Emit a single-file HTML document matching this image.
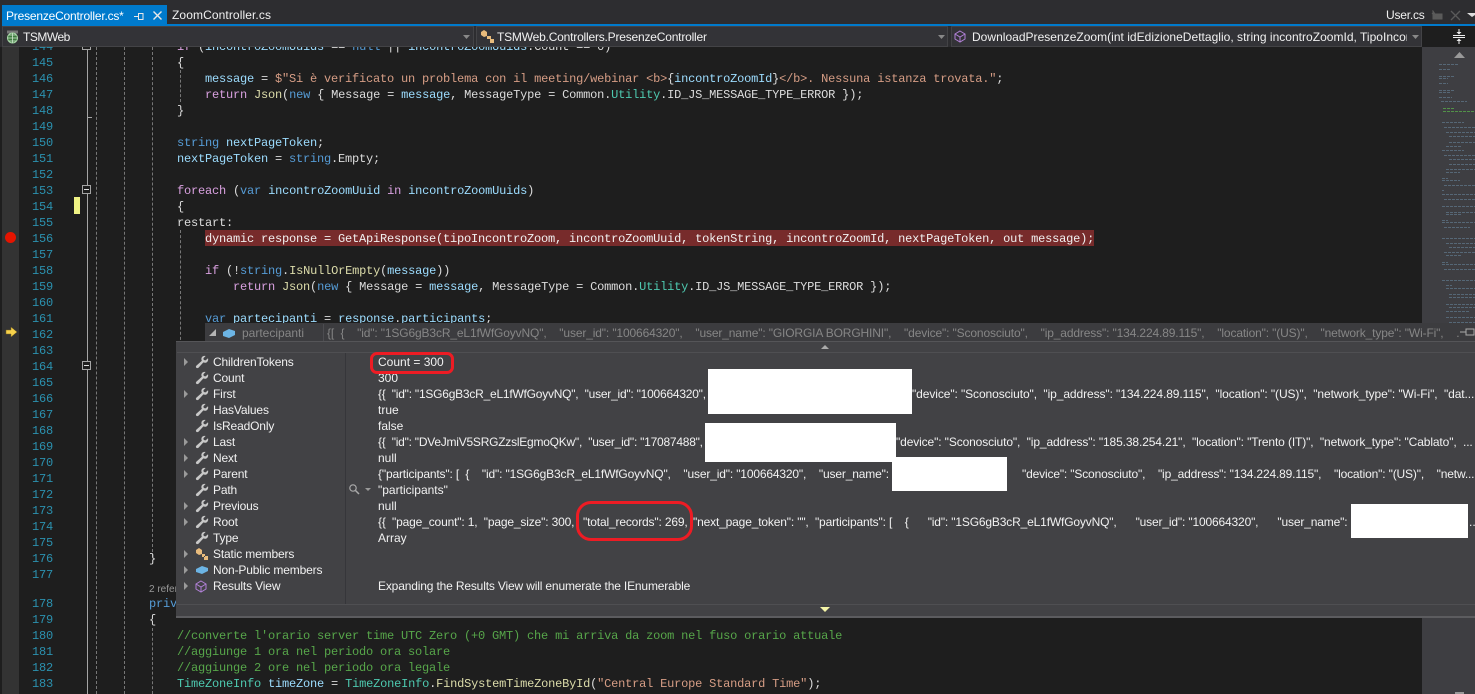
<!DOCTYPE html>
<html><head><meta charset="utf-8"><style>
html,body{margin:0;padding:0;background:#1e1e1e}
#r{position:relative;width:1475px;height:694px;overflow:hidden;background:#1e1e1e}
#r div{position:absolute}
.u,.u span{font:12px/16px "Liberation Sans",sans-serif;white-space:pre;color:#f1f1f1}
.n{font:12px/16px "Liberation Mono",monospace;letter-spacing:-.2px;color:#2b91af;left:32px;white-space:pre;margin-top:1px}
.c{font:12px/16px "Liberation Mono",monospace;letter-spacing:-.2px;color:#dcdcdc;white-space:pre;margin-top:1px}
.k{color:#569cd6}.p{color:#d8a0df}.i{color:#9cdcfe}.s{color:#d69d85}.t{color:#4ec9b0}.g{color:#57a64a}.m{color:#dcdcaa}
.d{width:0;border-left:1px dashed #777}
.w{background:#fff}
.l{left:213px}
.a{width:0;height:0;left:184px;border-left:4px solid #9a9a9a;border-top:4px solid transparent;border-bottom:4px solid transparent}
.b{left:82px;width:7px;height:7px;border:1px solid #a5a5a5;background:#1e1e1e}
.b:after{content:"";position:absolute;left:1px;top:3px;width:5px;height:1px;background:#ddd}
svg{position:absolute}
</style></head><body><div id="r">

<!-- tab bar -->
<div style="left:0;top:0;width:1475px;height:26px;background:#2d2d30"></div>
<div style="left:2px;top:5px;width:165px;height:21px;background:#007acc"></div>
<div style="left:2px;top:24px;width:1473px;height:2px;background:#007acc"></div>
<div class="u" style="left:6px;top:8px;color:#fff;letter-spacing:-.2px">PresenzeController.cs*</div>
<svg style="left:133px;top:10px" width="12" height="12"><path d="M1 6.5H5M5.5 3.5H10V9.5H5.5ZM5.5 3V10" stroke="#e8e8e8" fill="none"/></svg>
<svg style="left:152px;top:10px" width="11" height="11"><path d="M1.5 1.5L9.5 9.5M9.5 1.5L1.5 9.5" stroke="#e8e8e8" stroke-width="1.4"/></svg>
<div class="u" style="left:172px;top:7px;letter-spacing:.1px">ZoomController.cs</div>
<div class="u" style="left:1386px;top:7px;letter-spacing:-.2px">User.cs</div>
<svg style="left:1431px;top:10px" width="44" height="12"><path d="M2 1L4 4H11V9H4L2 9ZM1 3L4 7" stroke="#5a5a5a" fill="#5a5a5a"/><path d="M20 1L29 10M29 1L20 10" stroke="#5a5a5a" stroke-width="1.3"/><path d="M36 3H44V5L41 7Z" fill="#ddd"/></svg>

<!-- editor gutter -->
<div style="left:2px;top:47px;width:17px;height:647px;background:#333333"></div>
<div style="left:87px;top:45px;width:1px;height:649px;background:#a5a5a5"></div>
<div style="left:87px;top:117px;width:5px;height:1px;background:#a5a5a5"></div>
<div class="d" style="left:96px;top:47px;height:647px"></div>
<div class="d" style="left:124px;top:47px;height:647px"></div>
<div class="d" style="left:152px;top:47px;height:510px"></div>
<div class="d" style="left:180px;top:70px;height:32px"></div>
<div class="d" style="left:180px;top:230px;height:120px"></div>
<div class="d" style="left:152px;top:628px;height:66px"></div>
<div class="b" style="top:41px"></div><div class="b" style="top:185px"></div><div class="b" style="top:361px"></div>
<div style="left:74px;top:197px;width:6px;height:17px;background:#eff284"></div>
<div style="left:5px;top:232px;width:11px;height:11px;border-radius:50%;background:#e51400"></div>
<svg style="left:5px;top:326px" width="13" height="12"><path d="M1 4H6V1L12 6L6 11V8H1Z" fill="#f7d24b" stroke="#7a6420" stroke-width=".5"/></svg>

<!-- line numbers -->
<div class="n" style="top:38px">144</div>
<div class="n" style="top:54px">145</div><div class="n" style="top:70px">146</div><div class="n" style="top:86px">147</div><div class="n" style="top:102px">148</div><div class="n" style="top:118px">149</div><div class="n" style="top:134px">150</div><div class="n" style="top:150px">151</div><div class="n" style="top:166px">152</div><div class="n" style="top:182px">153</div><div class="n" style="top:198px">154</div><div class="n" style="top:214px">155</div><div class="n" style="top:230px">156</div><div class="n" style="top:246px">157</div><div class="n" style="top:262px">158</div><div class="n" style="top:278px">159</div><div class="n" style="top:294px">160</div><div class="n" style="top:310px">161</div><div class="n" style="top:326px">162</div><div class="n" style="top:342px">163</div><div class="n" style="top:358px">164</div><div class="n" style="top:374px">165</div><div class="n" style="top:390px">166</div><div class="n" style="top:406px">167</div><div class="n" style="top:422px">168</div><div class="n" style="top:438px">169</div><div class="n" style="top:454px">170</div><div class="n" style="top:470px">171</div><div class="n" style="top:486px">172</div><div class="n" style="top:502px">173</div><div class="n" style="top:518px">174</div><div class="n" style="top:534px">175</div><div class="n" style="top:550px">176</div><div class="n" style="top:566px">177</div><div class="n" style="top:595px">178</div><div class="n" style="top:611px">179</div><div class="n" style="top:627px">180</div><div class="n" style="top:643px">181</div><div class="n" style="top:659px">182</div><div class="n" style="top:675px">183</div>

<!-- code -->
<div class="c" style="left:177px;top:38px"><span class="p">if</span> (<span class="i">incontroZoomUuids</span> == <span class="k">null</span> || <span class="i">incontroZoomUuids</span>.Count == 0)</div>
<div class="c" style="left:177px;top:54px">{</div>
<div class="c" style="left:205px;top:70px"><span class="i">message</span> = <span class="s">$"Si è verificato un problema con il meeting/webinar &lt;b&gt;</span>{<span class="i">incontroZoomId</span>}<span class="s">&lt;/b&gt;. Nessuna istanza trovata."</span>;</div>
<div class="c" style="left:205px;top:86px"><span class="p">return</span> <span class="m">Json</span>(<span class="k">new</span> { Message = <span class="i">message</span>, MessageType = Common.<span class="t">Utility</span>.ID_JS_MESSAGE_TYPE_ERROR });</div>
<div class="c" style="left:177px;top:102px">}</div>
<div class="c" style="left:177px;top:134px"><span class="k">string</span> <span class="i">nextPageToken</span>;</div>
<div class="c" style="left:177px;top:150px"><span class="i">nextPageToken</span> = <span class="k">string</span>.Empty;</div>
<div class="c" style="left:177px;top:182px"><span class="p">foreach</span> (<span class="k">var</span> <span class="i">incontroZoomUuid</span> <span class="p">in</span> <span class="i">incontroZoomUuids</span>)</div>
<div class="c" style="left:177px;top:198px">{</div>
<div class="c" style="left:177px;top:214px">restart:</div>
<div style="left:205px;top:230px;width:889px;height:16px;background:#772b2b"></div>
<div class="c" style="left:205px;top:230px;color:#f0f0f0">dynamic response = GetApiResponse(tipoIncontroZoom, incontroZoomUuid, tokenString, incontroZoomId, nextPageToken, out message);</div>
<div class="c" style="left:205px;top:262px"><span class="p">if</span> (!<span class="k">string</span>.<span class="m">IsNullOrEmpty</span>(<span class="i">message</span>))</div>
<div class="c" style="left:233px;top:278px"><span class="p">return</span> <span class="m">Json</span>(<span class="k">new</span> { Message = <span class="i">message</span>, MessageType = Common.<span class="t">Utility</span>.ID_JS_MESSAGE_TYPE_ERROR });</div>
<div class="c" style="left:205px;top:310px"><span class="k">var</span> <span class="i">partecipanti</span> = <span class="i">response</span>.<span class="i">participants</span>;</div>
<div class="c" style="left:149px;top:550px">}</div>
<div class="u" style="left:149px;top:582px;font-size:10px;color:#999">2 references</div>
<div class="c" style="left:149px;top:595px"><span class="k">private</span></div>
<div class="c" style="left:149px;top:611px">{</div>
<div class="c g" style="left:177px;top:627px">//converte l'orario server time UTC Zero (+0 GMT) che mi arriva da zoom nel fuso orario attuale</div>
<div class="c g" style="left:177px;top:643px">//aggiunge 1 ora nel periodo ora solare</div>
<div class="c g" style="left:177px;top:659px">//aggiunge 2 ore nel periodo ora legale</div>
<div class="c" style="left:177px;top:675px"><span class="t">TimeZoneInfo</span> <span class="i">timeZone</span> = <span class="t">TimeZoneInfo</span>.<span class="m">FindSystemTimeZoneById</span>(<span class="s">"Central Europe Standard Time"</span>);</div>

<!-- minimap -->
<div style="left:1422px;top:47px;width:53px;height:647px;background:#3e3e42"></div>
<svg style="left:1453px;top:51px" width="13" height="8"><path d="M1 7L6.5 1L12 7Z" fill="#999"/></svg>
<svg style="left:1422px;top:47px" width="53" height="300">
<g stroke="#66839a" stroke-width="1" stroke-dasharray="3 1" opacity=".6" fill="none">
<path d="M17 17.5H36M17 22.5H28M17 29.5H32M17 31.5H26M17 36.5H26M17 43.5H32M17 45.5H29M17 50.5H30M19 54.5H45"/>
<path d="M20 75.5H42M22 80.5H53M24 85.5H53M27 89.5H53M27 95.5H53M24 99.5H40M20 103.5H42M22 108.5H53M27 112.5H53M27 117.5H53M24 122.5H53M24 125.5H38"/>
<path d="M20 131.5H26M20 133.5H38M22 138.5H53M20 143.5H22M20 147.5H53M22 152.5H53M20 159.5H53M24 165.5H53M24 167.5H40"/>
<path d="M20 173.5H26M20 175.5H53M22 180.5H48M20 191.5H53M24 196.5H53M27 200.5H53M22 205.5H53M24 208.5H40M20 215.5H26M20 217.5H53M22 222.5H53M20 233.5H53M24 238.5H30M24 241.5H53M27 247.5H53M27 250.5H53M24 257.5H53M27 260.5H53M24 264.5H48M24 270.5H53M27 275.5H53"/>
</g>
<g stroke="#57a64a" stroke-width="1" stroke-dasharray="3 1" opacity=".8" fill="none"><path d="M21 61.5H33M21 64.5H53"/></g>
</svg>
<div style="left:1455px;top:692px;width:9px;height:2px;background:#999"></div>

<!-- peek row -->
<div style="left:205px;top:323px;width:1270px;height:18px;background:#3c3c3f"></div>
<svg style="left:209px;top:327px" width="30" height="12"><path d="M0 9H7V2Z" fill="#b5b5b5"/><path d="M14 5L20 2L26 4V8L20 11L14 9Z" fill="#6cb4e4"/></svg>
<div class="u" style="left:242px;top:325px;color:#868686">partecipanti</div>
<div style="left:323px;top:324px;width:1px;height:17px;background:#4c4c50"></div>
<div style="left:327px;top:325px;width:1133px;height:16px;overflow:hidden"><div class="u" style="left:0;top:0;color:#868686;letter-spacing:-.14px">{[  {    "id": "1SG6gB3cR_eL1fWfGoyvNQ",    "user_id": "100664320",    "user_name": "GIORGIA BORGHINI",    "device": "Sconosciuto",    "ip_address": "134.224.89.115",    "location": "(US)",    "network_type": "Wi-Fi",    ...</div></div>
<svg style="left:1460px;top:327px" width="15" height="10"><path d="M0 5H6M6 2H14V8H6Z" stroke="#aaa" fill="none"/></svg>

<!-- datatip panel -->
<div style="left:176px;top:341px;width:1299px;height:275px;background:#424245;border-top:1px solid #555558"></div>
<div style="left:177px;top:352px;width:1298px;height:1px;background:#4f4f52"></div>
<div style="left:345px;top:353px;width:1px;height:251px;background:#36363a"></div>
<div style="left:177px;top:604px;width:1298px;height:1px;background:#4f4f52"></div>
<div style="left:176px;top:616px;width:1299px;height:2px;background:#5c5c5f"></div>
<svg style="left:820px;top:344px" width="10" height="6"><path d="M1 5L5 1L9 5Z" fill="#aaa"/></svg>
<svg style="left:819px;top:606px" width="12" height="7"><path d="M1 1H11L6 6Z" fill="#f5f5a8"/></svg>

<!-- arrows -->
<div class="a" style="top:358px"></div><div class="a" style="top:390px"></div><div class="a" style="top:438px"></div><div class="a" style="top:454px"></div><div class="a" style="top:470px"></div><div class="a" style="top:502px"></div><div class="a" style="top:518px"></div><div class="a" style="top:550px"></div><div class="a" style="top:566px"></div><div class="a" style="top:582px"></div>

<!-- wrench icons -->
<svg width="0" height="0"><symbol id="wr" viewBox="0 0 14 14"><path d="M13 3.2L10.6 5.4L8.8 5L8.4 3.2L10.6 1C8.6.4 6.6 1.6 6.4 3.6C6.3 4.4 6.5 5.2 6.9 5.8L1.4 10.6C.6 11.4.8 12.4 1.5 12.9C2.2 13.4 3 13.2 3.6 12.6L8.4 7.4C9.2 7.8 10 7.9 10.8 7.7C12.6 7.2 13.6 5.2 13 3.2Z" fill="#c8c8c8"/></symbol></svg>
<svg style="left:195px;top:355px" width="14" height="14"><use href="#wr"/></svg>
<svg style="left:195px;top:371px" width="14" height="14"><use href="#wr"/></svg>
<svg style="left:195px;top:387px" width="14" height="14"><use href="#wr"/></svg>
<svg style="left:195px;top:403px" width="14" height="14"><use href="#wr"/></svg>
<svg style="left:195px;top:419px" width="14" height="14"><use href="#wr"/></svg>
<svg style="left:195px;top:435px" width="14" height="14"><use href="#wr"/></svg>
<svg style="left:195px;top:451px" width="14" height="14"><use href="#wr"/></svg>
<svg style="left:195px;top:467px" width="14" height="14"><use href="#wr"/></svg>
<svg style="left:195px;top:483px" width="14" height="14"><use href="#wr"/></svg>
<svg style="left:195px;top:499px" width="14" height="14"><use href="#wr"/></svg>
<svg style="left:195px;top:515px" width="14" height="14"><use href="#wr"/></svg>
<svg style="left:195px;top:531px" width="14" height="14"><use href="#wr"/></svg>
<svg style="left:195px;top:547px" width="15" height="14"><path d="M1 3L4 1L7 3V7L4 8L1 6ZM7 7H10V10H7ZM9 9V13H13V9Z" fill="#e8bb7c"/></svg>
<svg style="left:195px;top:563px" width="14" height="14"><path d="M1 6L7 3L13 5V8L7 11L1 9Z" fill="#6cb4e4"/></svg>
<svg style="left:195px;top:579px" width="13" height="14"><path d="M6 2L11 5V10L6 13L1 10V5ZM1 5L6 8L11 5M6 8V13" fill="none" stroke="#b180d7"/></svg>

<!-- panel text, shifted 1px -->
<div style="left:0;top:1px;width:1475px;height:693px">
<div class="u l" style="top:353px;letter-spacing:-.15px">ChildrenTokens</div>
<div class="u l" style="top:369px;letter-spacing:-.15px">Count</div>
<div class="u l" style="top:385px;letter-spacing:-.15px">First</div>
<div class="u l" style="top:401px;letter-spacing:-.15px">HasValues</div>
<div class="u l" style="top:417px;letter-spacing:-.15px">IsReadOnly</div>
<div class="u l" style="top:433px;letter-spacing:-.15px">Last</div>
<div class="u l" style="top:449px;letter-spacing:-.15px">Next</div>
<div class="u l" style="top:465px;letter-spacing:-.15px">Parent</div>
<div class="u l" style="top:481px;letter-spacing:-.15px">Path</div>
<div class="u l" style="top:497px;letter-spacing:-.15px">Previous</div>
<div class="u l" style="top:513px;letter-spacing:-.15px">Root</div>
<div class="u l" style="top:529px;letter-spacing:-.15px">Type</div>
<div class="u l" style="top:545px;letter-spacing:-.15px">Static members</div>
<div class="u l" style="top:561px;letter-spacing:-.15px">Non-Public members</div>
<div class="u l" style="top:577px;letter-spacing:-.15px">Results View</div>

<div class="u" style="left:378px;top:353px">Count = 300</div>
<div class="u" style="left:378px;top:369px">300</div>
<div class="u" style="left:378px;top:385px;letter-spacing:-.23px">{{  "id": "1SG6gB3cR_eL1fWfGoyvNQ",  "user_id": "100664320",</div>
<div class="u" style="left:912px;top:385px;letter-spacing:-.09px">"device": "Sconosciuto",  "ip_address": "134.224.89.115",  "location": "(US)",  "network_type": "Wi-Fi",  "dat...</div>
<div class="u" style="left:378px;top:401px">true</div>
<div class="u" style="left:378px;top:417px">false</div>
<div class="u" style="left:378px;top:433px;letter-spacing:-.24px">{{  "id": "DVeJmiV5SRGZzslEgmoQKw",  "user_id": "17087488",</div>
<div class="u" style="left:896px;top:433px;letter-spacing:-.12px">"device": "Sconosciuto",  "ip_address": "185.38.254.21",  "location": "Trento (IT)",  "network_type": "Cablato",  ...</div>
<div class="u" style="left:378px;top:449px">null</div>
<div class="u" style="left:378px;top:465px;letter-spacing:-.16px">{"participants": [  {    "id": "1SG6gB3cR_eL1fWfGoyvNQ",    "user_id": "100664320",    "user_name":</div>
<div class="u" style="left:1022px;top:465px;letter-spacing:-.16px">"device": "Sconosciuto",    "ip_address": "134.224.89.115",    "location": "(US)",    "netw...</div>
<svg style="left:348px;top:482px" width="26" height="12"><circle cx="5" cy="5" r="3.2" fill="none" stroke="#aaa" stroke-width="1.2"/><path d="M7.5 7.5L11 11" stroke="#aaa" stroke-width="1.5"/><path d="M17 5H23L20 8Z" fill="#999"/></svg>
<div class="u" style="left:378px;top:481px">"participants"</div>
<div class="u" style="left:378px;top:497px">null</div>
<div class="u" style="left:378px;top:513px;letter-spacing:-.16px">{{  "page_count": 1,  "page_size": 300,</div>
<div class="u" style="left:583px;top:513px;letter-spacing:-.16px">"total_records": 269,</div>
<div class="u" style="left:693px;top:513px;letter-spacing:-.16px">"next_page_token": "",  "participants": [    {      "id": "1SG6gB3cR_eL1fWfGoyvNQ",      "user_id": "100664320",      "user_name":</div>
<div class="u" style="left:1469px;top:513px">...</div>
<div class="u" style="left:378px;top:529px">Array</div>
<div class="u" style="left:378px;top:577px;letter-spacing:-.16px">Expanding the Results View will enumerate the IEnumerable</div>
</div>

<!-- redactions -->
<div class="w" style="left:708px;top:369px;width:204px;height:45px"></div>
<div class="w" style="left:705px;top:423px;width:191px;height:39px"></div>
<div class="w" style="left:892px;top:457px;width:115px;height:34px"></div>
<div class="w" style="left:1351px;top:504px;width:117px;height:34px"></div>

<!-- red annotations -->
<div style="left:370px;top:352px;width:78px;height:16px;border:3px solid #ed1c24;border-radius:7px"></div>
<div style="left:576px;top:501px;width:111px;height:34px;border:3px solid #ed1c24;border-radius:15px"></div>

<!-- nav bar (on top of clipped first line) -->
<div style="left:0;top:26px;width:1475px;height:21px;background:#2d2d30"></div>
<div style="left:2px;top:26px;width:470px;height:19px;background:#333337;border:1px solid #434346"></div>
<div style="left:476px;top:26px;width:470px;height:19px;background:#333337;border:1px solid #434346"></div>
<div style="left:951px;top:26px;width:469px;height:19px;background:#333337;border:1px solid #434346"></div>
<div style="left:1422px;top:26px;width:53px;height:21px;background:#1e1e1e"></div>
<svg style="left:6px;top:30px" width="14" height="14"><rect x="1" y="0.5" width="11" height="3" fill="#777"/><circle cx="6.5" cy="8" r="5" fill="#3d7a3d" stroke="#a5d6a5"/><path d="M1.5 8H11.5M6.5 3V13M3 5H10M3 11H10" stroke="#cfe8cf" stroke-width=".8"/></svg>
<div class="u" style="left:23px;top:29px;letter-spacing:-.5px">TSMWeb</div>
<svg style="left:463px;top:35px" width="8" height="5"><path d="M0 0H7L3.5 4Z" fill="#888"/></svg>
<svg style="left:480px;top:29px" width="15" height="15"><path d="M1 3L4 1L7 3L7 7L4 8L1 6ZM7 7H11V10H7ZM10 10V14H14V10Z" fill="#e8bb7c"/></svg>
<div class="u" style="left:497px;top:29px;letter-spacing:-.2px">TSMWeb.Controllers.PresenzeController</div>
<svg style="left:938px;top:35px" width="8" height="5"><path d="M0 0H7L3.5 4Z" fill="#888"/></svg>
<svg style="left:954px;top:29px" width="12" height="14"><path d="M6 2L11 5V10L6 13L1 10V5ZM1 5L6 8L11 5M6 8V13" fill="none" stroke="#b180d7"/></svg>
<div style="left:972px;top:29px;width:435px;height:16px;overflow:hidden"><div class="u" style="left:0;top:0;letter-spacing:.02px">DownloadPresenzeZoom(int idEdizioneDettaglio, string incontroZoomId, TipoIncontroZoom</div></div>
<svg style="left:1412px;top:35px" width="8" height="5"><path d="M0 0H7L3.5 4Z" fill="#888"/></svg>
<svg style="left:1453px;top:29px" width="13" height="15"><path d="M0 6.5H12M0 8.5H12M6 0V4M6 11V15" stroke="#eee"/><path d="M3.5 3L6 5.5L8.5 3ZM3.5 12L6 9.5L8.5 12Z" fill="#eee"/></svg>

</div></body></html>
